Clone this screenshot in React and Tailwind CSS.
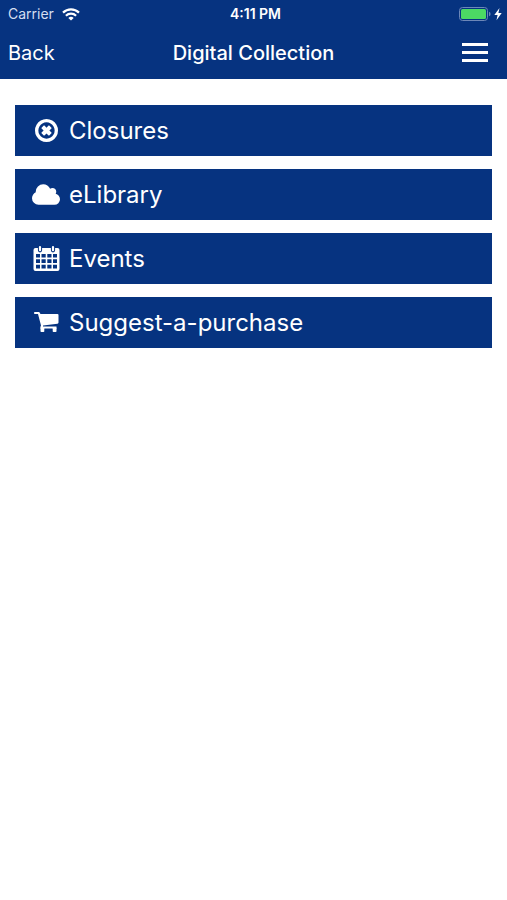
function ClosuresIcon() {
  return (
    <svg viewBox="128 128 1536 1536" className="h-[23px] w-[23px]" fill="currentColor" aria-hidden="true">
      <path d="M1225 1079l-146 146q-10 10-23 10t-23-10l-137-137-137 137q-10 10-23 10t-23-10l-146-146q-10-10-10-23t10-23l137-137-137-137q-10-10-10-23t10-23l146-146q10-10 23-10t23 10l137 137 137-137q10-10 23-10t23 10l146 146q10 10 10 23t-10 23l-137 137 137 137q10 10 10 23t-10 23zm215-183q0-148-73-273t-198-198-273-73-273 73-198 198-73 273 73 273 198 198 273 73 273-73 198-198 73-273zm224 0q0 209-103 385.500t-279.500 279.500-385.500 103-385.500-103-279.500-279.500-103-385.500 103-385.500 279.500-279.500 385.500-103 385.500 103 279.500 279.500 103 385.500z" />
    </svg>
  );
}

function CloudIcon() {
  return (
    <svg viewBox="64 128 1920 1408" className="h-[21px] w-7" fill="currentColor" aria-hidden="true">
      <path d="M1984 1152q0 159-112.500 271.500t-271.500 112.500h-1088q-185 0-316.500-131.500t-131.500-316.500q0-132 71-241.500t187-163.500q-2-28-2-43 0-212 150-362t362-150q158 0 286.500 88t187.500 230q70-62 166-62 106 0 181 75t75 181q0 75-41 138 129 30 213 134.500t84 239.500z" />
    </svg>
  );
}

function CalendarIcon() {
  return (
    <svg viewBox="0 0 27 27" className="h-[27px] w-[27px]" aria-hidden="true">
      <path
        fill="currentColor"
        fillRule="evenodd"
        d="M2.500 3H24.500Q26.500 3 26.500 5V24Q26.500 26 24.500 26H2.500Q.5 26 .5 24V5Q.5 3 2.500 3ZM3 9V12.500H7V9ZM8.500 9V12.500H12.700V9ZM14.300 9V12.500H18.500V9ZM20 9V12.500H24V9ZM3 14.200V18H7V14.200ZM8.500 14.200V18H12.700V14.200ZM14.300 14.200V18H18.500V14.200ZM20 14.200V18H24V14.200ZM3 19.700V23.500H7V19.700ZM8.500 19.700V23.500H12.700V19.700ZM14.300 19.700V23.500H18.500V19.700ZM20 19.700V23.500H24V19.700Z"
      />
      <path d="M7 2.200V5.300M20 2.200V5.300" stroke="#063380" strokeWidth="4.200" strokeLinecap="round" />
      <path d="M7 2V5.200M20 2V5.200" stroke="currentColor" strokeWidth="2.200" strokeLinecap="round" />
    </svg>
  );
}

function CartIcon() {
  return (
    <svg viewBox="0 0 25 21" className="h-[21px] w-[25px]" fill="currentColor" aria-hidden="true">
      <path d="M.8 0H5.200L6.500 2H23.500Q24.500 2 24.500 3V10.500Q24.500 11.500 23.500 11.700L9 13.500L9 14.600H22.500V16.500H7.200Q6 16.500 6.400 15L7 13.500L4 2H.8Q0 2 0 1T.8 0Z" />
      <rect x="6.500" y="15.500" width="3.800" height="4.500" rx="0.800" />
      <rect x="18.700" y="15.500" width="3.800" height="4.500" rx="0.800" />
    </svg>
  );
}

const items = [
  { Icon: ClosuresIcon, label: "Closures" },
  { Icon: CloudIcon, label: "eLibrary" },
  { Icon: CalendarIcon, label: "Events" },
  { Icon: CartIcon, label: "Suggest-a-purchase" },
];

function StatusBar() {
  return (
    <div className="grid h-7 grid-cols-3 items-center pr-1 pl-2 text-sm leading-4">
      <div className="flex items-center gap-2 text-[#d5dff0]">
        <span>Carrier</span>
        <svg viewBox="0 0 18 13" className="h-[13px] w-[18px]" fill="none" stroke="#fff" strokeWidth="2.2" aria-hidden="true">
          <path d="M1 4.600A11.500 11.500 0 0 1 17 4.600" />
          <path d="M3.900 7.700A7.300 7.300 0 0 1 14.100 7.700" />
          <path d="M9 12.600L6.300 10A3.800 3.800 0 0 1 11.700 10Z" fill="#fff" stroke="none" />
        </svg>
      </div>
      <div className="text-center font-semibold">4:11 PM</div>
      <svg viewBox="0 0 44 14" className="h-3.5 w-11 justify-self-end" aria-hidden="true">
        <rect x="0.500" y="0.500" width="28" height="13" rx="3" fill="none" stroke="#6d87b8" />
        <rect x="2" y="2" width="25" height="10" rx="1.500" fill="#4cd964" />
        <path d="M30 4.800Q31.600 5.200 31.600 7T30 9.200Z" fill="#6d87b8" />
        <path d="M40.500 1L35.300 8H38.600L37.500 13.200L42.700 6.100H39.400Z" fill="#fff" />
      </svg>
    </div>
  );
}

export default function App() {
  return (
    <div className="min-h-screen bg-white font-['Inter',sans-serif] text-white">
      <header className="bg-[#063380] pb-0.5">
        <StatusBar />
        <div className="grid h-[49px] grid-cols-[1fr_auto_1fr] items-center px-2 text-xl">
          <button type="button" className="justify-self-start">Back</button>
          <h1 className="font-medium">Digital Collection</h1>
          <button type="button" aria-label="Menu" className="flex flex-col gap-[5px] justify-self-end px-[11px]">
            <span className="h-[3px] w-[26px] bg-white" />
            <span className="h-[3px] w-[26px] bg-white" />
            <span className="h-[3px] w-[26px] bg-white" />
          </button>
        </div>
      </header>
      <main>
        <nav className="flex flex-col gap-[13px] px-[15px] pt-[26px]">
          {items.map(({ Icon, label }) => (
            <a key={label} href="#" className="flex h-[51px] items-center bg-[#063380] px-4 text-2xl">
              <span className="mr-2 flex w-[30px] justify-center">
                <Icon />
              </span>
              {label}
            </a>
          ))}
        </nav>
      </main>
    </div>
  );
}
